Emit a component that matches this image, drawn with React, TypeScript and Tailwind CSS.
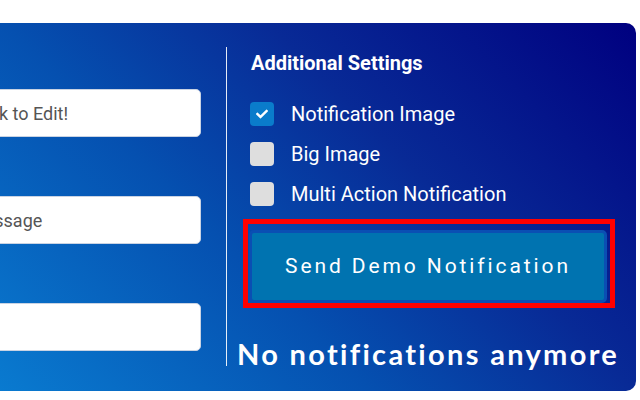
import { FaCheck } from 'react-icons/fa';

const inputs = ['Click to Edit!', 'Message', ''];

const options = [
  { label: 'Notification Image', checked: true },
  { label: 'Big Image', checked: false },
  { label: 'Multi Action Notification', checked: false },
];

export default function App() {
  return (
    <div
      className="w-[640px] h-[400px] overflow-hidden bg-white pt-[23px]"
      style={{ fontFamily: 'Roboto, "Liberation Sans", sans-serif' }}
    >
      <div className="ml-[-50px] flex h-[368px] w-[686px] rounded-[10px] bg-[linear-gradient(45deg,#0a80d4_0%,#0550b0_40%,#082a96_65%,#000080_100%)] pt-[24px]">
        {/* form fields */}
        <div className="flex h-[319px] w-[277px] flex-col gap-[59px] border-r border-white/90 pl-[13px] pt-[42px]">
          {inputs.map((v, i) => (
            <div
              key={i}
              className="flex h-[48px] w-[238px] items-center rounded-[5px] border border-[#c9d3e3] bg-white pl-[5px] pr-[12px] text-[18px] text-[#555]"
            >
              {v}
            </div>
          ))}
        </div>

        {/* settings */}
        <div className="flex h-[319px] flex-1 flex-col pl-[16px]">
          <h3 className="mt-[5px] pl-[8px] text-[20px] font-bold leading-[22px] text-white">
            Additional Settings
          </h3>
          <div className="mt-[28px] flex flex-col gap-[16px] pl-[7px]">
            {options.map((o) => (
              <label key={o.label} className="flex h-[24px] items-center gap-[17px]">
                <span
                  className={`flex h-[24px] w-[24px] items-center justify-center rounded-[4px] ${
                    o.checked ? 'bg-[#0a7ccb]' : 'bg-[#dedede]'
                  }`}
                >
                  {o.checked && <FaCheck className="h-[12px] w-[12px] text-white" />}
                </span>
                <span className="text-[20px] leading-[24px] text-white">{o.label}</span>
              </label>
            ))}
          </div>

          <div className="mt-[13px] h-[93px] w-[372px] border-[5px] border-[#ff0000] pl-[1px] pt-[6px]">
            <button className="flex h-[73px] w-[358px] items-center justify-center rounded-[5px] border-[3px] border-[#0a4fb3] bg-[#0073b0] text-[21px] tracking-[2.9px] text-white">
              Send Demo Notification
            </button>
          </div>

          <p
            className="ml-[-6px] mt-[30px] text-[29px] font-bold leading-[32px] tracking-[0.08em] text-white"
            style={{ fontFamily: 'Lato, "DejaVu Sans", sans-serif' }}
          >
            No notifications anymore
          </p>
        </div>
      </div>
    </div>
  );
}
